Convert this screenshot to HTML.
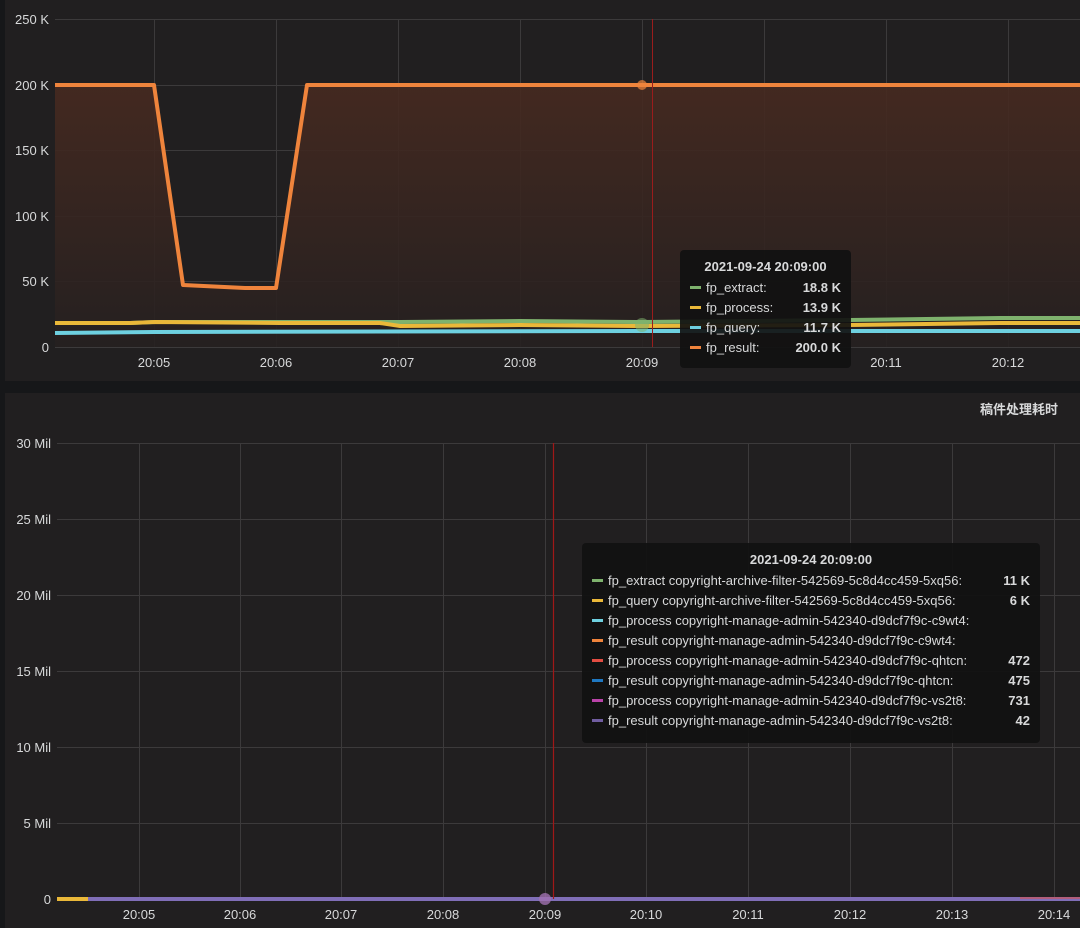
<!DOCTYPE html>
<html><head><meta charset="utf-8"><style>
html,body{margin:0;padding:0;background:#161719;width:1080px;height:928px;overflow:hidden}
svg{display:block}
text{font-family:"Liberation Sans","Noto Sans CJK SC",sans-serif;fill:#d8d9da;font-size:13px}
.tt{position:absolute;background:rgba(17,17,17,0.92);border-radius:4px;color:#d8d9da;font-family:"Liberation Sans",sans-serif;font-size:13px}
.tt .h{font-weight:bold;text-align:center;margin-bottom:4px}
.tt .r{display:flex;justify-content:space-between;height:20px;line-height:20px;white-space:nowrap}
.tt .r b{margin-left:12px}
.tt i{display:inline-block;width:11px;height:3px;vertical-align:middle;margin-right:5px;position:relative;top:-1px}
</style></head><body>
<svg width="1080" height="928" viewBox="0 0 1080 928">
<defs>
<linearGradient id="g1" x1="0" y1="0" x2="0" y2="1">
<stop offset="0" stop-color="#472a20"/><stop offset="1" stop-color="#252020"/>
</linearGradient>
</defs>
<rect x="5" y="0" width="1075" height="381" fill="#211f20"/>
<rect x="5" y="393" width="1075" height="535" fill="#211f20"/>
<!-- top grid -->
<g stroke="#3c3a3b" stroke-width="1">
<line x1="55" y1="19.5" x2="1080" y2="19.5"/><line x1="55" y1="85.5" x2="1080" y2="85.5"/>
<line x1="55" y1="150.5" x2="1080" y2="150.5"/><line x1="55" y1="216.5" x2="1080" y2="216.5"/>
<line x1="55" y1="281.5" x2="1080" y2="281.5"/><line x1="55" y1="347.5" x2="1080" y2="347.5"/>
<line x1="154.5" y1="19" x2="154.5" y2="347"/><line x1="276.5" y1="19" x2="276.5" y2="347"/>
<line x1="398.5" y1="19" x2="398.5" y2="347"/><line x1="520.5" y1="19" x2="520.5" y2="347"/>
<line x1="642.5" y1="19" x2="642.5" y2="347"/><line x1="764.5" y1="19" x2="764.5" y2="347"/>
<line x1="886.5" y1="19" x2="886.5" y2="347"/><line x1="1008.5" y1="19" x2="1008.5" y2="347"/>
</g>
<g text-anchor="end">
<text x="49" y="24">250 K</text><text x="49" y="90">200 K</text><text x="49" y="155">150 K</text>
<text x="49" y="221">100 K</text><text x="49" y="286">50 K</text><text x="49" y="352">0</text>
</g>
<g text-anchor="middle">
<text x="154" y="367">20:05</text><text x="276" y="367">20:06</text><text x="398" y="367">20:07</text>
<text x="520" y="367">20:08</text><text x="642" y="367">20:09</text><text x="886" y="367">20:11</text><text x="1008" y="367">20:12</text>
</g>
<path d="M55,85 L154,85 L183,285 L245,288 L276,288 L307,85 L1080,85 L1080,347 L55,347Z" fill="url(#g1)" opacity="0.9"/>
<path d="M55,85 L154,85 L183,285 L245,288 L276,288 L307,85 L1080,85" fill="none" stroke="#ef843c" stroke-width="4" stroke-linejoin="round"/>
<path d="M55,323 L130,323 L155,322 L400,322 L520,321 L642,322 L850,320 L1000,318 L1080,318" fill="none" stroke="#7eb26d" stroke-width="4"/>
<path d="M55,323 L130,323 L155,322 L280,323 L380,323 L400,326 L520,325 L642,326 L850,325 L1000,323 L1080,323" fill="none" stroke="#eab839" stroke-width="4"/>
<path d="M55,333 L155,332 L642,331 L1080,331" fill="none" stroke="#6ed0e0" stroke-width="4"/>
<line x1="652.5" y1="19" x2="652.5" y2="347" stroke="#9a1c1c" stroke-width="1"/>
<circle cx="642" cy="85" r="5" fill="#ef843c" opacity="0.7"/>
<circle cx="642" cy="325" r="7" fill="#7eb26d" opacity="0.55"/>
<!-- bottom -->
<text x="1058" y="414" text-anchor="end" font-weight="bold" font-size="14">稿件处理耗时</text>
<g stroke="#3c3a3b" stroke-width="1">
<line x1="57" y1="443.5" x2="1080" y2="443.5"/><line x1="57" y1="519.5" x2="1080" y2="519.5"/>
<line x1="57" y1="595.5" x2="1080" y2="595.5"/><line x1="57" y1="671.5" x2="1080" y2="671.5"/>
<line x1="57" y1="747.5" x2="1080" y2="747.5"/><line x1="57" y1="823.5" x2="1080" y2="823.5"/>
<line x1="139.5" y1="443" x2="139.5" y2="899"/><line x1="240.5" y1="443" x2="240.5" y2="899"/>
<line x1="341.5" y1="443" x2="341.5" y2="899"/><line x1="443.5" y1="443" x2="443.5" y2="899"/>
<line x1="545.5" y1="443" x2="545.5" y2="899"/><line x1="646.5" y1="443" x2="646.5" y2="899"/>
<line x1="748.5" y1="443" x2="748.5" y2="899"/><line x1="850.5" y1="443" x2="850.5" y2="899"/>
<line x1="952.5" y1="443" x2="952.5" y2="899"/><line x1="1054.5" y1="443" x2="1054.5" y2="899"/>
</g>
<g text-anchor="end">
<text x="51" y="448">30 Mil</text><text x="51" y="524">25 Mil</text><text x="51" y="600">20 Mil</text>
<text x="51" y="676">15 Mil</text><text x="51" y="752">10 Mil</text><text x="51" y="828">5 Mil</text><text x="51" y="904">0</text>
</g>
<g text-anchor="middle">
<text x="139" y="919">20:05</text><text x="240" y="919">20:06</text><text x="341" y="919">20:07</text>
<text x="443" y="919">20:08</text><text x="545" y="919">20:09</text><text x="646" y="919">20:10</text>
<text x="748" y="919">20:11</text><text x="850" y="919">20:12</text><text x="952" y="919">20:13</text><text x="1054" y="919">20:14</text>
</g>
<line x1="57" y1="899" x2="1080" y2="899" stroke="#806eb7" stroke-width="4"/>
<line x1="1020" y1="898" x2="1080" y2="898" stroke="#e24d42" stroke-width="2" opacity="0.5"/>
<line x1="57" y1="899" x2="88" y2="899" stroke="#eab839" stroke-width="4"/>
<line x1="553.5" y1="443" x2="553.5" y2="899" stroke="#a01818" stroke-width="1.2"/>
<circle cx="545" cy="899" r="6" fill="#a070b0" opacity="0.8"/>
</svg>
<div class="tt" style="left:680px;top:250px;width:151px;padding:9px 10px 10px 10px">
<div class="h">2021-09-24 20:09:00</div>
<div class="r"><span><i style="background:#7eb26d"></i>fp_extract:</span><b>18.8 K</b></div>
<div class="r"><span><i style="background:#eab839"></i>fp_process:</span><b>13.9 K</b></div>
<div class="r"><span><i style="background:#6ed0e0"></i>fp_query:</span><b>11.7 K</b></div>
<div class="r"><span><i style="background:#ef843c"></i>fp_result:</span><b>200.0 K</b></div>
</div>
<div class="tt" style="left:582px;top:543px;width:438px;padding:9px 10px 12px 10px">
<div class="h">2021-09-24 20:09:00</div>
<div class="r"><span><i style="background:#7eb26d"></i>fp_extract copyright-archive-filter-542569-5c8d4cc459-5xq56:</span><b>11 K</b></div>
<div class="r"><span><i style="background:#eab839"></i>fp_query copyright-archive-filter-542569-5c8d4cc459-5xq56:</span><b>6 K</b></div>
<div class="r"><span><i style="background:#6ed0e0"></i>fp_process copyright-manage-admin-542340-d9dcf7f9c-c9wt4:</span><b></b></div>
<div class="r"><span><i style="background:#ef843c"></i>fp_result copyright-manage-admin-542340-d9dcf7f9c-c9wt4:</span><b></b></div>
<div class="r"><span><i style="background:#e24d42"></i>fp_process copyright-manage-admin-542340-d9dcf7f9c-qhtcn:</span><b>472</b></div>
<div class="r"><span><i style="background:#1f78c1"></i>fp_result copyright-manage-admin-542340-d9dcf7f9c-qhtcn:</span><b>475</b></div>
<div class="r"><span><i style="background:#ba43a9"></i>fp_process copyright-manage-admin-542340-d9dcf7f9c-vs2t8:</span><b>731</b></div>
<div class="r"><span><i style="background:#705da0"></i>fp_result copyright-manage-admin-542340-d9dcf7f9c-vs2t8:</span><b>42</b></div>
</div>
</body></html>
